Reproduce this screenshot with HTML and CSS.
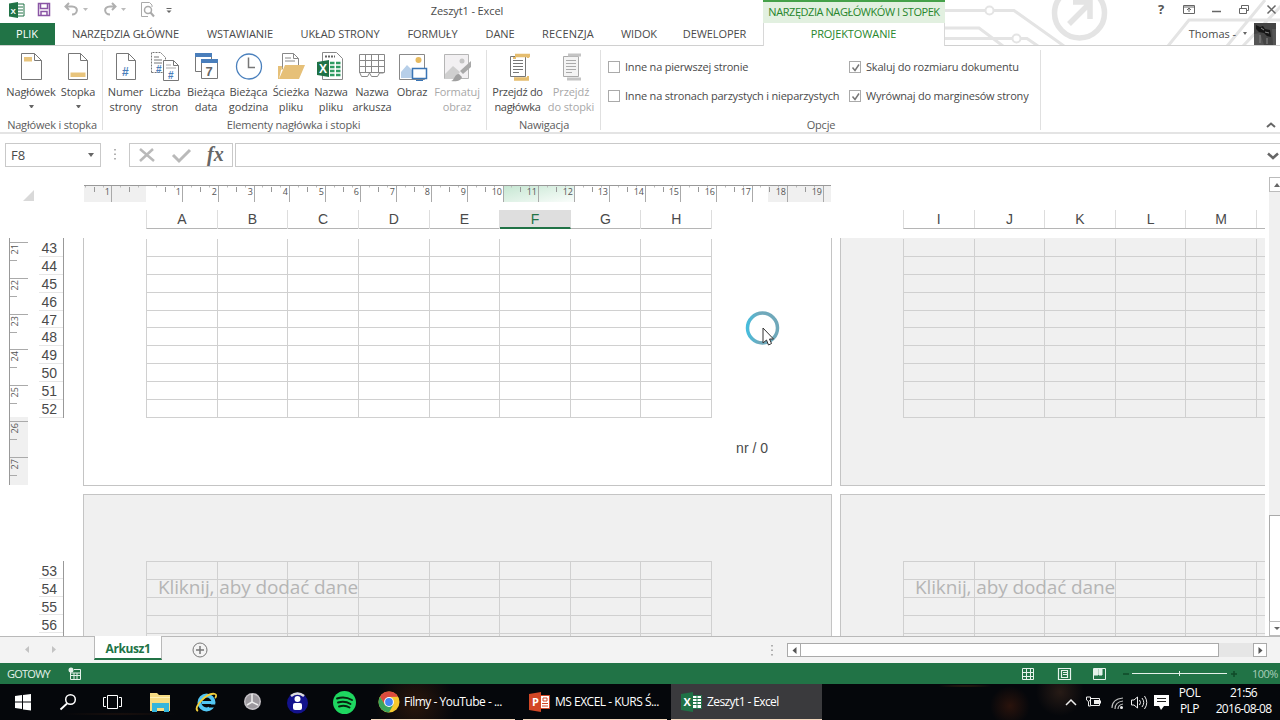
FILE: index.html
```
<!DOCTYPE html>
<html lang="pl">
<head>
    <meta charset="UTF-8">
    <title>Zeszyt1 - Excel</title>
    <link rel="stylesheet" href="styles.css">
</head>
<body>

<header class="top">
    <svg class="circuit" width="336" height="45" viewBox="944 0 336 45" fill="none" stroke="#e4e4e4" stroke-width="3">
        <path d="M944 10.500H985M994 10.500H1014L1064 46M944 28H979L1003 46M944 38.500H1012M1021 38.500H1027L1038 46"/>
        <circle cx="989.500" cy="10.500" r="4" stroke-width="2"/>
        <circle cx="1016.500" cy="38.500" r="4" stroke-width="2"/>
        <circle cx="1079.500" cy="13" r="25" stroke-width="5.500"/>
        <path d="M1069 24L1089 4M1073 2H1090V19" stroke-width="5.500"/>
        <path d="M1168 46L1189 20H1280M1227 46L1265 0M1243 46L1281 6"/>
    </svg>
    <div class="titlebar">
        <div class="quick">
            <svg width="180" height="22" viewBox="0 0 180 22" fill="none">
                <path d="M17 4h7v12h-7z" fill="#fff" stroke="#217346"/>
                <path d="M18 7h5M18 10h5M18 13h5" stroke="#217346"/>
                <path d="M9 3.500l9-1.500v16l-9-1.500z" fill="#217346"/>
                <text x="10.500" y="13.500" class="x-letter">X</text>
                <path d="M38.500 3.500h11v12h-11zM40.500 3.500v5h7v-5M41 15.500v-4h6v4" stroke="#8a55a5" stroke-width="1.500"/>
                <path d="M69 3l-3.500 3.500L69 10M66 6.500h6c7 0 6 8 0 8" stroke="#b0b0b0" stroke-width="2"/>
                <path d="M83 8h5l-2.500 3z" fill="#bbb"/>
                <path d="M112 3l3.500 3.500L112 10M115 6.500h-5c-7 0-6 8 0 8" stroke="#b0b0b0" stroke-width="2"/>
                <path d="M121 8h5l-2.500 3z" fill="#bbb"/>
                <path d="M148 16.500h-6.500v-14h8l2.500 2.500v2" stroke="#aaa"/>
                <circle cx="148" cy="10" r="3.500" stroke="#aaa" stroke-width="1.500"/>
                <path d="M150.500 12.500l3.500 4" stroke="#aaa" stroke-width="2"/>
                <path d="M166.500 8.500h5" stroke="#666"/>
                <path d="M166.500 10.500h5l-2.500 2.500z" fill="#666"/>
            </svg>
        </div>
        <div class="doc-title">Zeszyt1 - Excel</div>
        <div class="context-title">NARZĘDZIA NAGŁÓWKÓW I STOPEK</div>
        <svg class="win-buttons" width="130" height="22" viewBox="1150 0 130 22" fill="none" stroke="#666">
            <text x="1158" y="14" class="help">?</text>
            <path d="M1183.500 5.500h11v8h-11zM1183.500 7h11M1189 12v-4M1187 10l2-2 2 2"/>
            <path d="M1212 11.500h9" stroke-width="1.500"/>
            <path d="M1239.500 8.500h7v5h-7zM1241.500 8v-2.500h7v5h-2"/>
            <path d="M1267.500 5.500l8 8M1275.500 5.500l-8 8" stroke-width="1.500"/>
        </svg>
    </div>
    <nav class="tabs">
        <span class="tab file">PLIK</span>
        <span class="tab t-home">NARZĘDZIA GŁÓWNE</span>
        <span class="tab t-insert">WSTAWIANIE</span>
        <span class="tab t-layout">UKŁAD STRONY</span>
        <span class="tab t-formulas">FORMUŁY</span>
        <span class="tab t-data">DANE</span>
        <span class="tab t-review">RECENZJA</span>
        <span class="tab t-view">WIDOK</span>
        <span class="tab t-dev">DEWELOPER</span>
        <span class="tab active">PROJEKTOWANIE</span>
        <span class="user">Thomas - <i class="caret"></i></span>
        <svg class="avatar" width="22" height="22" viewBox="0 0 22 22">
            <rect width="22" height="22" fill="#444"/>
            <path d="M0 11l6-1 4 12H0zM18 6h4v16h-3z" fill="#555"/>
            <path d="M2 2l4 2 3-1 2 3 5 1 1 7-4-1-3-3-5-1-3-3z" fill="#151515"/>
            <path d="M11 9l4 1M7 5l3 2M6 12v8M13 15v6" stroke="#888"/>
        </svg>
    </nav>
</header>

<section class="ribbon">
    <div class="group g-hf">
        <div class="buttons">
            <div class="btn w50">
                <svg width="32" height="32" fill="none" stroke="#777">
                    <path d="M6.500 2.500h13l7 7v19h-20zM19.500 2.500v7h7" fill="#fff"/>
                    <path d="M9 6h8v4.500H9z" fill="#e8c47c" stroke="none"/>
                </svg>
                Nagłówek<i class="caret"></i>
            </div>
            <div class="btn w44">
                <svg width="32" height="32" fill="none" stroke="#777">
                    <path d="M6.500 2.500h12l7 7v19h-19zM18.500 2.500v7h7" fill="#fff"/>
                    <path d="M8.500 21.500h15V26h-15z" fill="#e8c47c" stroke="none"/>
                </svg>
                Stopka<i class="caret"></i>
            </div>
        </div>
        <div class="group-name">Nagłówek i stopka</div>
    </div>
    <div class="group g-elements">
        <div class="buttons">
            <div class="btn w41">
                <svg width="32" height="32" fill="none" stroke="#777">
                    <path d="M6.500 2.500h12l7 7v19h-19zM18.500 2.500v7h7" fill="#fff"/>
                    <text x="12" y="24.500" class="hash">#</text>
                </svg>
                Numer<br>strony
            </div>
            <div class="btn w38">
                <svg width="32" height="32" fill="none" stroke="#777">
                    <path d="M2.500 21.500v-20h9l5 5v15z" fill="#fff" stroke-dasharray="2 1"/>
                    <path d="M5 6h5M5 9h8M5 12h8"/>
                    <text x="7" y="22" class="hash small">#</text>
                    <path d="M14.500 9.500h10l5 5v15h-15zM24.500 9.500v5h5" fill="#fff"/>
                    <path d="M17 14h5M17 17h10" stroke="#aaa"/>
                    <text x="19" y="28" class="hash small">#</text>
                </svg>
                Liczba<br>stron
            </div>
            <div class="btn w44">
                <svg width="32" height="32" fill="none" stroke="#777">
                    <path d="M5.500 3.500h16v17h-16z" fill="#fff"/>
                    <path d="M5 2h17v4H5z" fill="#4a7ebb" stroke="none"/>
                    <path d="M11.500 9.500h16v18h-16z" fill="#fff"/>
                    <path d="M11 8h17v4H11z" fill="#4a7ebb" stroke="none"/>
                    <text x="15.500" y="25" class="seven">7</text>
                </svg>
                Bieżąca<br>data
            </div>
            <div class="btn w41">
                <svg width="32" height="32" fill="none">
                    <circle cx="16" cy="15.500" r="12.500" stroke="#4a80bd" stroke-width="1.300"/>
                    <path d="M15.500 6.500v10H22" stroke="#777" stroke-width="1.500"/>
                </svg>
                Bieżąca<br>godzina
            </div>
            <div class="btn w44">
                <svg width="32" height="32" fill="none" stroke="#888">
                    <path d="M7.500 18V2.500h11l5 5V18M18.500 2.500v5h5" fill="#fff"/>
                    <path d="M10 7h6M10 10h10"/>
                    <path d="M3 16h4v3" stroke="#e0b96f"/>
                    <path d="M3 28V15h4l-3 13zM10 14h20l-6 14H4z" fill="#e6c078" stroke="none"/>
                </svg>
                Ścieżka<br>pliku
            </div>
            <div class="btn w36">
                <svg width="32" height="32" fill="none" stroke="#888">
                    <path d="M7.500 1.500h14l6 6v21h-20z" fill="#fff"/>
                    <path d="M10 5.500h10" stroke="#666" stroke-width="2" stroke-dasharray="2 1"/>
                    <path d="M15 12h4.500M21 12h4.500M15 16h4.500M21 16h4.500M15 20h4.500M21 20h4.500M15 24h4.500M21 24h4.500" stroke="#2e9b62" stroke-width="2.500"/>
                    <path d="M2 11l12-2v17L2 24z" fill="#1f7246" stroke="none"/>
                    <text x="4" y="21.500" class="x-letter big">X</text>
                </svg>
                Nazwa<br>pliku
            </div>
            <div class="btn w46">
                <svg width="32" height="32" fill="none" stroke="#888">
                    <path d="M3.500 3.500h25v18h-25zM3.500 9.500h25M3.500 15.500h25M9.500 3.500v18M15.500 3.500v18M22.500 3.500v18" fill="#fff"/>
                    <path d="M3.500 21l2 4.500h6l2-3.500 2 3.500h6l2-3.500h4"/>
                </svg>
                Nazwa<br>arkusza
            </div>
            <div class="btn w34">
                <svg width="32" height="32" fill="none">
                    <path d="M3.500 3.500h25v25h-25z" fill="#fff" stroke="#888"/>
                    <path d="M5 27v-6l6-7 6 6v7z" fill="#b7cfe9"/>
                    <circle cx="22.500" cy="9" r="3" fill="#e7ba5f"/>
                    <path d="M16.500 17.500h14v10h-14z" fill="#fff" stroke="#3a75b5" stroke-width="1.500"/>
                    <path d="M20 29.500h7" stroke="#3a75b5"/>
                </svg>
                Obraz
            </div>
            <div class="btn w56 off">
                <svg width="32" height="32" fill="none">
                    <path d="M3.500 3.500h24v24h-24z" fill="#f2f0f2" stroke="#b5b5b5"/>
                    <path d="M4 23l8-8 7 6-5 7H4z" fill="#cfcfcf"/>
                    <circle cx="21" cy="10" r="2.500" fill="#c4c4c4"/>
                    <path d="M30 10v6l-8 7-3-3z" fill="#a8a8a8"/>
                    <path d="M10 30c4-1 3-7 8-7l3 3c-1 4-6 5-11 4z" fill="#a0a0a0"/>
                </svg>
                Formatuj<br>obraz
            </div>
        </div>
        <div class="group-name">Elementy nagłówka i stopki</div>
    </div>
    <div class="group g-nav">
        <div class="buttons">
            <div class="btn w59">
                <svg width="32" height="32" fill="none" stroke="#777">
                    <path d="M8.500 5.500h15v20h-15z" fill="#fff"/>
                    <path d="M11 9.500h10M11 12.500h10M11 15.500h10M11 18.500h10M11 21.500h6"/>
                    <path d="M13 4.500h15M12 28h15" stroke="#e5bd6f" stroke-width="3.500"/>
                    <path d="M14 7h-3M26 7v-3M26 25v4" stroke="#e5bd6f" stroke-width="2"/>
                </svg>
                Przejdź do<br>nagłówka
            </div>
            <div class="btn w48 off">
                <svg width="32" height="32" fill="none" stroke="#aaa">
                    <path d="M8.500 5.500h15v20h-15z" fill="#f4f4f4"/>
                    <path d="M11 9.500h10M11 12.500h10M11 15.500h10M11 18.500h10M11 21.500h6"/>
                    <path d="M13 4h13M12 28h14" stroke="#c4c4c4" stroke-width="3"/>
                </svg>
                Przejdź<br>do stopki
            </div>
        </div>
        <div class="group-name">Nawigacja</div>
    </div>
    <div class="group g-options">
        <div class="options">
            <div class="option"><i class="box"></i>Inne na pierwszej stronie</div>
            <div class="option"><i class="box"><svg width="11" height="11"><path d="M2.500 5.500l2.500 3 4-6" fill="none" stroke="#777" stroke-width="1.500"/></svg></i>Skaluj do rozmiaru dokumentu</div>
            <div class="option"><i class="box"></i>Inne na stronach parzystych i nieparzystych</div>
            <div class="option"><i class="box"><svg width="11" height="11"><path d="M2.500 5.500l2.500 3 4-6" fill="none" stroke="#777" stroke-width="1.500"/></svg></i>Wyrównaj do marginesów strony</div>
        </div>
        <div class="group-name">Opcje</div>
    </div>
    <svg class="collapse" width="10" height="8" fill="none"><path d="M1 6l4-3.500L9 6" stroke="#666" stroke-width="2"/></svg>
</section>

<section class="formula-bar">
    <div class="name-box">F8<i class="caret"></i></div>
    <svg class="dots" width="4" height="14"><path d="M2 2v11" stroke="#999" stroke-width="1.500" stroke-dasharray="1.500 3"/></svg>
    <div class="fx-box">
        <svg width="102" height="22" fill="none">
            <path d="M10 5l14 12M23 5L10 17" stroke="#b9b9b9" stroke-width="2.500"/>
            <path d="M43 11l6 6L60 6" stroke="#b9b9b9" stroke-width="3"/>
            <text x="77" y="17" class="fx">fx</text>
        </svg>
    </div>
    <div class="formula"></div>
    <svg class="expand" width="14" height="10" fill="none"><path d="M2 2.500l5 4.500 5-4.500" stroke="#666" stroke-width="2.500"/></svg>
</section>

<main class="work">
    <div class="sheet">
        <div class="ruler-row">
            <svg class="corner" width="11" height="11"><path d="M11 0v11H0z" fill="#d9d9d9"/></svg>
            <svg id="hRuler" class="h-ruler" width="748" height="18" viewBox="84 185 748 18">
                <defs>
                    <linearGradient id="active" x2="1" y2="1"><stop offset="0" stop-color="#c4e6d1"/><stop offset="1" stop-color="#fafdfb"/></linearGradient>
                </defs>
            </svg>
        </div>
        <div class="heads-row">
            <div class="heads first">
                <span>A</span><span>B</span><span>C</span><span>D</span><span>E</span><span class="selected">F</span><span>G</span><span>H</span>
            </div>
            <div class="heads second">
                <span>I</span><span>J</span><span>K</span><span>L</span><span>M</span><span></span>
            </div>
        </div>
        <div class="band upper">
            <svg id="vRuler" class="v-ruler" width="21" height="248" viewBox="8 238 21 248"></svg>
            <div class="row-nums" data-from="43" data-to="52"></div>
            <div class="page live">
                <div class="cells" data-rows="10" data-cols="8"></div>
                <div class="page-footer">nr / 0</div>
            </div>
            <div class="page side">
                <div class="cells" data-rows="10" data-cols="6"></div>
            </div>
        </div>
        <div class="band lower">
            <div class="row-nums" data-from="53" data-to="56"></div>
            <div class="page">
                <div class="cells" data-rows="5" data-cols="8"></div>
                <div class="hint">Kliknij, aby dodać dane</div>
            </div>
            <div class="page side">
                <div class="cells" data-rows="5" data-cols="6"></div>
                <div class="hint">Kliknij, aby dodać dane</div>
            </div>
        </div>
        <svg class="pointer" width="36" height="38" fill="none">
            <defs>
                <linearGradient id="ring"><stop offset="0" stop-color="#47bcdc"/><stop offset=".4" stop-color="#70a9bb"/><stop offset="1" stop-color="#6fa8ba"/></linearGradient>
            </defs>
            <circle cx="17.500" cy="18" r="15" stroke="url(#ring)" stroke-width="3.500"/>
            <path d="M18 18v15l3.500-3 2 5 3-1.500-2-4.500h4z" fill="#fff" stroke="#333"/>
        </svg>
    </div>
    <div class="v-scroll">
        <div class="arrow"><i class="caret up"></i></div>
        <div class="thumb"></div>
        <div class="arrow"><i class="caret"></i></div>
    </div>
</main>

<section class="sheet-tabs">
    <svg class="tab-arrows" width="36" height="10" fill="#c3c3c3"><path d="M5 1v7L1 4.500zM28 1v7l4-3.500z"/></svg>
    <div class="sheet-tab">Arkusz1</div>
    <svg class="add" width="16" height="16" fill="none" stroke="#777"><circle cx="8" cy="8" r="7"/><path d="M4 8h8M8 4v8" stroke-width="1.500"/></svg>
    <svg class="dots" width="4" height="14"><path d="M2 2v11" stroke="#999" stroke-width="1.500" stroke-dasharray="1.500 3"/></svg>
    <div class="h-scroll">
        <svg class="end" width="14" height="14"><path d="M8.500 3v7L4.500 6.500z" fill="#555"/></svg>
        <div class="h-thumb"></div>
        <svg class="end" width="14" height="14"><path d="M4.500 3v7l4-3.500z" fill="#555"/></svg>
    </div>
</section>

<footer class="status">
    <span class="ready">GOTOWY</span>
    <svg class="macro" width="13" height="13" fill="none" stroke="#e5f1ea"><path d="M2.500 5v7.500h10V2.500H6M2 6h10M3 8.500h9M6 6v6M9 6v6"/><circle cx="3" cy="3" r="2.500" fill="#e5f1ea" stroke="none"/></svg>
    <svg class="views" width="90" height="14" viewBox="1021 666 90 14" fill="none" stroke="#e5f1ea">
        <path d="M1022.500 667.500h11v11h-11zM1022.500 671.500h11M1022.500 675.500h11M1026.500 667.500v11M1030.500 667.500v11"/>
        <path d="M1058.500 667.500h12v11h-12zM1061.500 669.500h6v7h-6zM1063 671.500h4M1063 673.500h4" stroke-width="1.200"/>
        <path d="M1093.500 667.500h12v11h-12z"/><path d="M1094 668h4v6h-4zM1099 668h3v6h-3z" fill="#e5f1ea"/>
    </svg>
    <svg class="zoom-bar" width="116" height="14" viewBox="1122 666 116 14" fill="none" stroke="#0f4a28">
        <path d="M1123 673h6M1231 673h6M1234 670v6" stroke-width="1.500"/>
        <path d="M1132 672.500h95M1179.500 670v5" stroke="#e5f1ea"/>
    </svg>
    <span class="zoom">100%</span>
</footer>

<footer class="taskbar">
    <svg class="launch" width="371" height="36" viewBox="0 684 371 36" fill="none">
        <path d="M15 696l7-1v6.500h-7zM23 695l8-1v7.500h-8zM15 702.500h7v6.500l-7-1zM23 702.500h8v8l-8-1z" fill="#fff"/>
        <circle cx="70.500" cy="699.500" r="4.800" stroke="#fff" stroke-width="1.500"/><path d="M67 703.500l-6.500 6" stroke="#fff" stroke-width="1.800"/>
        <path d="M107.500 695.500h10v13h-10zM106 697.500h-2.500v9h2.500M119 697.500h2.500v9h-2.500" stroke="#fff"/>
        <path d="M150 693h7l2 2h11v16h-20z" fill="#f7dc83"/><path d="M152 703h17v9h-5v-4h-7v4h-5z" fill="#35b5dc"/><path d="M150 697h20v1h-20z" fill="#fff1b8"/>
        <circle cx="206.500" cy="702.500" r="7" stroke="#52c6f4" stroke-width="4"/><path d="M202 702.500h11" stroke="#52c6f4" stroke-width="3"/><path d="M209 704.500h6v3h-6z" fill="#05070a"/>
        <path d="M198 711c-6-3 9-19 17-17 2 .5 1 3 0 4" stroke="#f3cf3c" stroke-width="1.800"/>
        <circle cx="252.500" cy="701.500" r="8.500" fill="#c4c0c5"/><circle cx="252.500" cy="701.500" r="7" fill="#9c989e"/><path d="M252 694v8l-5 3M252 702l6 3" stroke="#eee" stroke-width="1.500"/>
        <circle cx="297.500" cy="703" r="10.500" fill="#13128c"/><path d="M291 696q6.500-5 13 0" stroke="#ddd" stroke-width="2.500"/><circle cx="297.500" cy="699" r="3" fill="#fff"/><rect x="293" y="703" width="9" height="7" rx="2" fill="#fff"/>
        <circle cx="344.500" cy="702.500" r="11.500" fill="#1ed760"/><path d="M337 698.500q8-2.500 15 1.500M338 702.500q7-2 12.500 1.500M339 706.500q6-2 10.500 1" stroke="#07240f" stroke-width="1.900" stroke-linecap="round"/>
    </svg>
    <div class="task chrome">
        <svg width="22" height="22" viewBox="-11 -11 22 22">
            <circle r="10.500" fill="#f7c92e"/>
            <path d="M-9.100-5.200A10.500 10.500 0 0 1 9.100-5.200L0-5-4.500 2.500z" fill="#dd4b3e"/>
            <path d="M-9.100-5.200A10.500 10.500 0 0 0 0 10.500L4.500 2.500-4.300 2.500z" fill="#3ba55b"/>
            <circle r="4.900" fill="#fff"/><circle r="3.900" fill="#4486f4"/>
        </svg>
        Filmy - YouTube - ...
    </div>
    <div class="task ppt">
        <svg width="22" height="22" fill="none">
            <path d="M11.500 4.500h9v13h-9z" fill="#fff" stroke="#d24726"/>
            <path d="M13 12.500h6M13 15h6M14 7h4v3h-4z" stroke="#d24726"/>
            <path d="M0 3l12-2v20L0 19z" fill="#d24726"/>
            <text x="3" y="15" class="p-letter">P</text>
        </svg>
        MS EXCEL - KURS Ś...
    </div>
    <div class="task excel">
        <svg width="22" height="22" fill="none">
            <path d="M11.500 4.500h9v13h-9z" fill="#fff" stroke="#1f7246"/>
            <path d="M12 7.500h8M12 10.500h8M12 13.500h8M16 5v12" stroke="#1f7246"/>
            <path d="M0 3l12-2v20L0 19z" fill="#1f7246"/>
            <text x="2.500" y="15" class="p-letter">X</text>
        </svg>
        Zeszyt1 - Excel
    </div>
    <svg class="tray" width="108" height="24" viewBox="1064 690 108 24" fill="none" stroke="#eee">
        <path d="M1066 705l5-5 5 5" stroke-width="1.500"/>
        <path d="M1090.500 698.500h9v7h-9zM1100.500 700.500v3M1086.500 697v3q2 3 4 0v-3zM1088.500 702v4h2"/><path d="M1094 700h5v4h-5z" fill="#eee" stroke="none"/>
        <path d="M1112 708q0-9 11-10M1115 709q0-7 8-8M1118 709q0-4 5-5" stroke="#bbb" stroke-width="1.200"/><circle cx="1121.500" cy="707.500" r="1.500" fill="#eee" stroke="none"/>
        <path d="M1131.500 700h2.500l3.500-3v11l-3.500-3h-2.500zM1139.500 700q2 2.500 0 5M1142 698q3.500 4.500 0 9M1144.500 696q4.500 6.500 0 13"/>
        <path d="M1154 695h15v11h-5l-3 4-2-4h-5z" fill="#fff" stroke="none"/><path d="M1157 698.500h9M1157 701.500h9" stroke="#222"/>
    </svg>
    <div class="lang">POL<br>PLP</div>
    <div class="clock">21:56<br>2016-08-08</div>
</footer>

<script src="script.js"></script>
</body>
</html>
```
FILE: styles.css
```
* {
    box-sizing: border-box;
}
body {
    margin: 0;
    width: 1280px;
    height: 720px;
    overflow: hidden;
    background: #fff;
    color: #4a4a4a;
    font-family: "Open Sans", "Noto Sans", sans-serif;
    font-size: 11px;
    white-space: nowrap;
}
svg {
    display: block;
    flex: none;
}
.caret {
    display: inline-block;
    border: 3px solid transparent;
    border-top-color: #666;
    border-bottom: 0;
}
.caret.up {
    border-top: 0;
    border-bottom: 4px solid #666;
}

/* title and tabs */
.top {
    position: relative;
    height: 46px;
}
.circuit {
    position: absolute;
    left: 944px;
    top: 0;
}
.titlebar {
    position: relative;
    display: flex;
    height: 23px;
}
.quick {
    width: 180px;
}
.doc-title {
    width: 574px;
    margin-right: 9px;
    line-height: 22px;
    text-align: center;
    letter-spacing: -0.1px;
}
.context-title {
    width: 182px;
    height: 23px;
    background: #e2f0e0;
    border-top: 2px solid #45a149;
    color: #27862c;
    line-height: 19px;
    text-align: center;
    letter-spacing: -0.44px;
}
.win-buttons {
    margin-left: auto;
}
.help {
    font: bold 13px "Open Sans", sans-serif;
    fill: #555;
    stroke: none;
}
.tabs {
    position: relative;
    display: flex;
    height: 23px;
    border-bottom: 1px solid #d0d0d0;
    line-height: 22px;
}
.tab {
    text-align: center;
    letter-spacing: -0.1px;
    padding-right: 1px;
}
.file {
    width: 55px;
    margin-right: 3px;
    background: #217346;
    color: #fff;
}
.t-home { width: 136px; }
.t-insert { width: 93px; }
.t-layout { width: 107px; }
.t-formulas { width: 78px; }
.t-data { width: 57px; }
.t-review { width: 79px; letter-spacing: 0.2px; }
.t-view { width: 63px; }
.t-dev { width: 88px; }
.tab.active {
    width: 182px;
    height: 23px;
    margin-left: 4px;
    background: #fff;
    border: 1px solid #d8d8d8;
    border-width: 0 1px;
    color: #27862c;
}
.user {
    margin-left: auto;
    margin-right: 7px;
}
.user .caret {
    margin: 0 0 3px 4px;
    border-width: 3px 2.5px 0;
}
.avatar {
    margin-right: 4px;
}

/* ribbon */
.ribbon {
    display: flex;
    height: 88px;
    padding-top: 4px;
    border-bottom: 2px solid #e4e4e4;
}
.group {
    height: 80px;
    border-right: 1px solid #e0e0e0;
}
.g-hf { width: 103px; padding-left: 6px; }
.g-elements { width: 384px; padding-left: 2px; }
.g-nav { width: 114px; padding-left: 1px; }
.g-options { width: 440px; padding-left: 7px; }
.buttons {
    display: flex;
    height: 67px;
}
.btn {
    display: flow-root;
    flex: none;
    text-align: center;
    line-height: 15px;
    letter-spacing: -0.1px;
}
.btn svg {
    margin: 1px auto 1px;
}
.btn .caret {
    display: block;
    width: 5px;
    margin: 6px auto 0;
    border-width: 3px 2.5px 0;
}
.off {
    color: #a8a8a8;
}
.w34 { width: 34px; }
.w36 { width: 36px; }
.w38 { width: 38px; }
.w41 { width: 41px; }
.w44 { width: 44px; }
.w46 { width: 46px; }
.w48 { width: 48px; }
.w50 { width: 50px; }
.w56 { width: 56px; }
.w59 { width: 59px; letter-spacing: -0.3px; }
.group-name {
    line-height: 16px;
    text-align: center;
    color: #5c5c5c;
    letter-spacing: -0.2px;
}
.g-hf .group-name {
    margin-left: -4px;
}
.g-elements .group-name {
    padding-right: 4px;
}
.g-options .group-name {
    padding-right: 6px;
}
.options {
    display: grid;
    grid-template-columns: 241px 190px;
    grid-template-rows: 29px 29px;
    height: 67px;
    padding-top: 2px;
    letter-spacing: -0.2px;
}
.option {
    display: flex;
    align-items: center;
}
.box {
    width: 12px;
    height: 12px;
    margin-right: 5px;
    border: 1px solid #aaa;
}
.collapse {
    margin: 71px 4px 0 auto;
}
.x-letter {
    font: bold 8px "Liberation Sans", sans-serif;
    fill: #fff;
    stroke: none;
}
.x-letter.big {
    font-size: 12px;
}
.p-letter {
    font: bold 11px "Open Sans", sans-serif;
    fill: #fff;
}
.hash {
    font: bold 12px "Liberation Sans", sans-serif;
    fill: #4a7ebb;
    stroke: none;
}
.hash.small {
    font-size: 10px;
}
.seven {
    font: bold 13px "Liberation Sans", sans-serif;
    fill: #666;
    stroke: none;
}

/* formula bar */
.formula-bar {
    display: flex;
    height: 34px;
    padding-top: 9px;
}
.name-box {
    display: flex;
    justify-content: space-between;
    align-items: center;
    width: 96px;
    height: 24px;
    margin-left: 5px;
    padding: 0 6px 0 5px;
    border: 1px solid #c9c9c9;
    font-size: 13px;
}
.name-box .caret {
    border-width: 4px 3.5px 0;
}
.formula-bar .dots {
    margin: 4px 12px 0;
}
.fx-box {
    width: 104px;
    height: 24px;
    border: 1px solid #c9c9c9;
}
.fx {
    font: italic bold 20px "Liberation Serif", serif;
    fill: #666;
}
.formula {
    flex: 1;
    height: 24px;
    margin-left: 2px;
    border: 1px solid #c9c9c9;
    border-right: 0;
}
.expand {
    margin: 8px 0 0 -15px;
}

/* sheet */
.work {
    display: flex;
    height: 468px;
}
.sheet {
    position: relative;
    width: 1265px;
    height: 468px;
    overflow: hidden;
    font-family: "Liberation Sans", sans-serif;
}
.ruler-row {
    display: flex;
    height: 42px;
    padding-top: 17px;
}
.corner {
    margin: 5px 50px 0 23px;
}
.tick {
    font: 9px "Open Sans", sans-serif;
    fill: #555;
}
.heads-row {
    display: flex;
    height: 28px;
    padding-left: 146px;
}
.heads {
    display: grid;
    flex: none;
    height: 19px;
    border-bottom: 1px solid #b5b5b5;
    border-left: 1px solid #ddd;
    font-size: 14px;
    line-height: 18px;
    text-align: center;
}
.heads span {
    border-right: 1px solid #ddd;
}
.heads .selected {
    height: 19px;
    background: #dedede;
    border-bottom: 2px solid #217346;
    color: #217346;
}
.first {
    width: 566px;
    grid-template-columns: repeat(8, 1fr);
}
.second {
    width: 425px;
    margin-left: 191px;
    grid-template-columns: repeat(6, 70.6px);
}
.band {
    display: flex;
}
.upper {
    height: 248px;
    margin-bottom: 8px;
    padding-left: 8px;
}
.lower {
    height: 142px;
    padding-left: 39px;
}
.row-nums {
    flex: none;
    width: 25px;
    height: 180px;
    margin: 0 19px 0 10px;
    padding-top: 1px;
    border-right: 1px solid #999;
}
.lower .row-nums {
    height: 76px;
    margin: 67px 19px 0 0;
    padding-top: 0;
}
.row-nums div {
    height: 17.9px;
    padding-right: 6px;
    border-bottom: 1px solid #e6e6e6;
    font-size: 14px;
    line-height: 19px;
    text-align: right;
}
.lower .row-nums div {
    line-height: 20px;
}
.page {
    position: relative;
    flex: none;
    width: 749px;
    padding: 1px 0 0 63px;
    background: #f0f0f0;
    border: 1px solid #c4c4c4;
    border-width: 0 1px 1px;
}
.lower .page {
    border-width: 1px 1px 0;
    padding-top: 66px;
}
.page.side {
    margin-left: 8px;
}
.page.side .cells {
    grid-template-columns: repeat(6, 70.6px);
}
.page.live {
    background: #fff;
}
.cells {
    display: grid;
    width: 566px;
    height: 179px;
    margin-left: -1px;
    grid-template-columns: repeat(8, 1fr);
    grid-auto-rows: 17.9px;
    border-left: 1px solid #d0d0d0;
}
.lower .cells {
    height: 90px;
    border-top: 1px solid #d0d0d0;
}
.cells i {
    border: 1px solid #d0d0d0;
    border-width: 0 1px 1px 0;
}
.page-footer {
    width: 621px;
    padding-top: 22px;
    font-size: 14px;
    line-height: 16px;
    text-align: right;
}
/* prompt drawn over the grid */
.hint {
    position: absolute;
    left: 74px;
    top: 77px;
    color: #b5b5b5;
    font: 19px/30px "Open Sans", sans-serif;
    letter-spacing: -0.12px;
}
.pointer {
    position: absolute;
    left: 745px;
    top: 142px;
}
.v-scroll {
    display: flex;
    flex-direction: column;
    width: 11px;
    margin-left: 4px;
    padding-top: 9px;
    background: linear-gradient(#fff 9px, #f0f0f0 9px);
}
.arrow {
    display: flex;
    align-items: center;
    justify-content: center;
    width: 15px;
    height: 15px;
    background: #fff;
    border: 1px solid #bbb;
}
.v-scroll .arrow .caret {
    border-left-width: 3.5px;
    border-right-width: 3.5px;
}
.thumb {
    width: 15px;
    height: 106px;
    margin-top: auto;
    background: #fff;
    border: 1px solid #aaa;
    border-bottom: 0;
}

/* bottom bars */
.sheet-tabs {
    display: flex;
    height: 27px;
    background: #f3f3f3;
    border-top: 1px solid #b9b9b9;
}
.tab-arrows {
    margin: 8px 34px 0 24px;
}
.sheet-tab {
    width: 68px;
    height: 24px;
    margin-top: -1px;
    background: #fff;
    border: 1px solid #b9b9b9;
    border-width: 0 1px;
    border-bottom: 2px solid #217346;
    color: #217346;
    font-size: 12px;
    font-weight: bold;
    line-height: 25px;
    text-align: center;
    letter-spacing: -0.4px;
}
.add {
    margin: 5px 0 0 30px;
}
.sheet-tabs .dots {
    margin: 6px 13px 0 562px;
}
.h-scroll {
    display: flex;
    width: 480px;
    height: 14px;
    margin-top: 6px;
    background: #e6e6e6;
}
.end {
    background: #fff;
    border: 1px solid #aaa;
}
.h-thumb {
    width: 419px;
    margin-right: auto;
    margin-left: -1px;
    background: #fff;
    border: 1px solid #aaa;
}
.status {
    display: flex;
    align-items: center;
    height: 21px;
    background: #217346;
    color: #e5f1ea;
}
.ready {
    width: 62px;
    padding-left: 7px;
    letter-spacing: -0.75px;
}
.macro {
    margin-left: 6px;
}
.views {
    margin-left: 940px;
}
.zoom-bar {
    margin-left: 11px;
}
.zoom {
    width: 28px;
    margin-left: 14px;
    color: #a9cdb8;
    letter-spacing: -0.5px;
}
.taskbar {
    display: flex;
    height: 36px;
    background:
        radial-gradient(circle at 415px 20px, #2a160c, transparent 40px),
        radial-gradient(ellipse at 120px 30px, #1d110d, transparent 60px),
        radial-gradient(ellipse at 965px 2px, #38220f, transparent 30px),
        radial-gradient(circle at 1010px 22px, #2a130c, transparent 20px),
        radial-gradient(circle at 1060px 8px, #271b16, transparent 24px),
        #05070b;
    color: #fff;
    font-size: 12px;
}
.task {
    display: flex;
    align-items: center;
    height: 36px;
    border-bottom: 1px solid #f3d7bd;
    letter-spacing: -0.5px;
}
.task svg {
    margin-right: 4px;
}
.chrome {
    width: 144px;
    padding-left: 7px;
}
.ppt {
    width: 144px;
    margin-left: 8px;
    padding-left: 6px;
}
.excel {
    width: 151px;
    margin-left: 4px;
    padding-left: 10px;
    background: #3a3a3d;
    letter-spacing: -0.6px;
}
.tray {
    margin: 6px 0 0 242px;
}
.lang, .clock {
    padding-top: 1px;
    line-height: 15.5px;
    text-align: center;
    letter-spacing: -0.7px;
}
.lang {
    width: 35px;
    letter-spacing: -0.5px;
}
.clock {
    width: 73px;
}
```
FILE: script.js
```
const NS = 'http://www.w3.org/2000/svg';

function add(parent, name, attrs, text) {
    const el = document.createElementNS(NS, name);
    for (const key in attrs) el.setAttribute(key, attrs[key]);
    if (text !== undefined) el.textContent = text;
    parent.appendChild(el);
}

// horizontal ruler, zero at the left margin of the page
const h = document.getElementById('hRuler');
const cm = 35.57;
const zero = 147.4;
add(h, 'rect', { x: 84, y: 185, width: 62, height: 17, fill: '#f0f0f0' });
add(h, 'rect', { x: 768, y: 185, width: 63, height: 17, fill: '#f0f0f0' });
add(h, 'rect', { x: 503, y: 185, width: 71, height: 17, fill: 'url(#active)' });
add(h, 'path', { d: 'M84 185.5H831', stroke: '#999' });
for (let i = -1; i <= 19; i++) {
    const x = Math.floor(zero + i * cm) + 0.5;
    if (i !== 0) {
        add(h, 'path', { d: `M${x} 186V202`, stroke: '#aaa' });
        add(h, 'text', { x: x - 1.5, y: 195, 'text-anchor': 'end', class: 'tick' }, Math.abs(i));
    }
    const half = Math.floor(zero + (i - 0.5) * cm) + 0.5;
    add(h, 'path', { d: `M${half} 187V192`, stroke: '#999' });
    add(h, 'path', { d: `M${half - 9} 186V187.500M${half + 9} 186V187.500`, stroke: '#bbb' });
}

// vertical ruler
const v = document.getElementById('vRuler');
add(v, 'rect', { x: 9, y: 417, width: 19, height: 68, fill: '#f0f0f0' });
add(v, 'path', { d: 'M9.5 238V485', stroke: '#999' });
for (let i = 0; i < 7; i++) {
    const y = Math.floor(242.7 + i * 35.75) + 0.5;
    add(v, 'path', { d: `M10 ${y}H28M10 ${y + 18}H17`, stroke: '#aaa' });
    add(v, 'text', { transform: `translate(18 ${y + 12}) rotate(-90)`, class: 'tick' }, 21 + i);
}

document.querySelectorAll('.row-nums').forEach(box => {
    for (let n = +box.dataset.from; n <= +box.dataset.to; n++) {
        const row = document.createElement('div');
        row.textContent = n;
        box.appendChild(row);
    }
});

document.querySelectorAll('.cells').forEach(box => {
    const count = box.dataset.rows * box.dataset.cols;
    for (let n = 0; n < count; n++) box.appendChild(document.createElement('i'));
});
```
